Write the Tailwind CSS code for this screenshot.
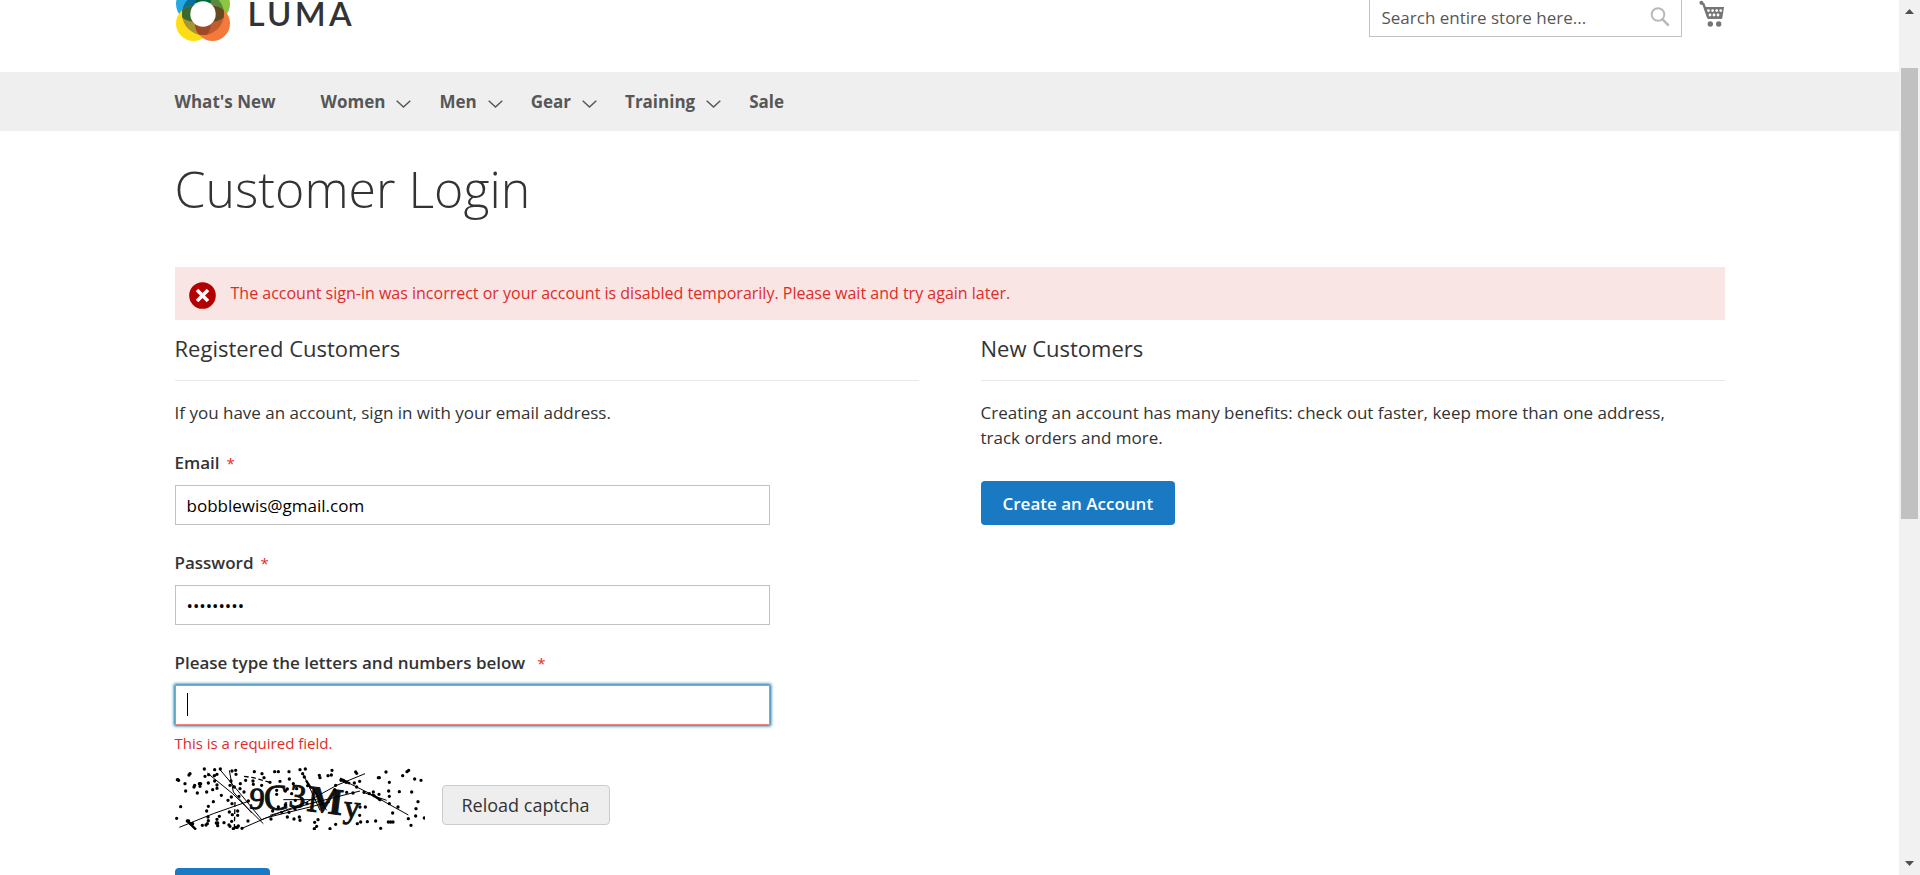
<!DOCTYPE html>
<html lang="en">
<head>
<meta charset="utf-8">
<title>Customer Login</title>
<script src="https://cdn.jsdelivr.net/npm/@tailwindcss/browser@4"></script>
</head>
<body class="flex h-screen overflow-hidden bg-white font-['Open_Sans',sans-serif] text-[17px] leading-[25px] text-[#333333]">
<div class="min-w-0 flex-1">
  <header class="mx-auto flex h-[72px] max-w-[1550px] items-start">
    <a href="#" aria-label="Luma" class="flex items-start gap-[17px]">
      <svg class="h-[42px] w-[56px]" viewBox="175 0 56 42" aria-hidden="true">
        <defs>
          <clipPath id="ring"><circle cx="203" cy="14" r="21"/></clipPath>
          <clipPath id="cb"><circle cx="193.5" cy="4" r="17.5"/></clipPath>
          <clipPath id="cg"><circle cx="212.5" cy="4" r="17.5"/></clipPath>
          <clipPath id="cy"><circle cx="193.5" cy="23.5" r="17.5"/></clipPath>
        </defs>
        <circle cx="193.5" cy="4" r="17.5" fill="#26a9e0"/>
        <circle cx="212.5" cy="4" r="17.5" fill="#8dc63f"/>
        <circle cx="193.5" cy="23.5" r="17.5" fill="#ffdd15"/>
        <circle cx="212.5" cy="23.5" r="17.5" fill="#f4793b"/>
        <g clip-path="url(#ring)">
          <circle cx="193.5" cy="4" r="17.5" fill="#0a7099"/>
          <circle cx="212.5" cy="4" r="17.5" fill="#568a3c"/>
          <circle cx="193.5" cy="23.5" r="17.5" fill="#a89432"/>
          <circle cx="212.5" cy="23.5" r="17.5" fill="#c05d30"/>
          <g clip-path="url(#cb)"><circle cx="193.5" cy="23.5" r="17.5" fill="#39692f"/></g>
          <g clip-path="url(#cg)"><circle cx="212.5" cy="23.5" r="17.5" fill="#64481f"/></g>
          <g clip-path="url(#cb)"><circle cx="212.5" cy="4" r="17.5" fill="#006838"/></g>
          <g clip-path="url(#cy)"><circle cx="212.5" cy="23.5" r="17.5" fill="#9f4a26"/></g>
        </g>
        <circle cx="203" cy="14" r="12.7" fill="#fff"/>
      </svg>
      <span class="-mt-[6px] font-['Lato',sans-serif] text-[33px] leading-[38px] font-semibold tracking-widest">LUMA</span>
    </a>
    <div class="ml-auto flex items-start">
      <form class="relative -mt-[3px]">
        <label for="search" class="sr-only">Search</label>
        <input id="search" type="text" placeholder="Search entire store here..." class="h-10 w-[313px] border border-[#c2c2c2] pr-10 pl-3 placeholder:text-[#575757]">
        <button type="button" aria-label="Search" class="absolute top-[10px] right-3">
          <svg class="size-5" viewBox="0 0 20 20" fill="none" stroke="#b9b9b9" aria-hidden="true"><circle cx="8" cy="7.500" r="6.300" stroke-width="2"/><path d="M12.600 12.300 18 17.800" stroke-width="2.600" stroke-linecap="round"/></svg>
        </button>
      </form>
      <a href="#" aria-label="My Cart" class="ml-[17px]">
        <svg class="h-7 w-[26px]" viewBox="0 0 26 28" aria-hidden="true">
          <path d="M2 2.800 4.500 4.200 9.200 17.600H22.500" fill="none" stroke="#757575" stroke-width="2.400" stroke-linejoin="round"/><circle cx="2.400" cy="2.800" r="2" fill="#757575"/>
          <path d="M5 7H25L23.200 18.800H9Z" fill="#757575"/>
          <g stroke="#fff" stroke-width="2.800" stroke-linecap="round"><path d="M9.500 10.600h0M13.600 10.600h0M17.700 10.600h0M21.700 10.600h0M11 15h0M15 15h0M19 15h0"/></g>
          <circle cx="11.300" cy="24" r="2.700" fill="#757575"/><circle cx="19.700" cy="24" r="2.700" fill="#757575"/>
        </svg>
      </a>
    </div>
  </header>

  <nav class="bg-[#efefef]">
    <ul class="mx-auto flex h-[59px] max-w-[1550px] items-center font-bold text-[#575757]">
      <li class="mr-[45px]"><a href="#">What's New</a></li>
      <li class="mr-7"><a href="#" class="flex items-center gap-[11px]">Women<svg class="mt-1 h-2 w-[15px]" viewBox="0 0 15 8" fill="none" stroke="#575757" stroke-width="1.500" aria-hidden="true"><path d="M.7.800 7.500 7 14.300.800"/></svg></a></li>
      <li class="mr-7"><a href="#" class="flex items-center gap-[11px]">Men<svg class="mt-1 h-2 w-[15px]" viewBox="0 0 15 8" fill="none" stroke="#575757" stroke-width="1.500" aria-hidden="true"><path d="M.7.800 7.500 7 14.300.800"/></svg></a></li>
      <li class="mr-7"><a href="#" class="flex items-center gap-[11px]">Gear<svg class="mt-1 h-2 w-[15px]" viewBox="0 0 15 8" fill="none" stroke="#575757" stroke-width="1.500" aria-hidden="true"><path d="M.7.800 7.500 7 14.300.800"/></svg></a></li>
      <li class="mr-7"><a href="#" class="flex items-center gap-[11px]">Training<svg class="mt-1 h-2 w-[15px]" viewBox="0 0 15 8" fill="none" stroke="#575757" stroke-width="1.500" aria-hidden="true"><path d="M.7.800 7.500 7 14.300.800"/></svg></a></li>
      <li><a href="#">Sale</a></li>
    </ul>
  </nav>

  <main class="mx-auto max-w-[1550px]">
    <h1 class="pt-[31px] text-[50px] leading-[55px] font-light">Customer Login</h1>
    <div role="alert" class="mt-[50px] flex h-[53px] items-center gap-[15px] bg-[#fae5e5] pl-[14px] text-[16px] text-[#e02b27]">
      <svg class="mt-1 size-[27px]" viewBox="0 0 27 27" aria-hidden="true"><circle cx="13.500" cy="13.500" r="13.300" fill="#b30000"/><path d="m8 8 11 11m0-11L8 19" stroke="#fff" stroke-width="3.600"/></svg>
      <p>The account sign-in was incorrect or your account is disabled temporarily. Please wait and try again later.</p>
    </div>

    <div class="grid grid-cols-2 gap-[62px] pt-[13px]">
      <section>
        <h2 class="border-b border-[#e8e8e8] pb-[17px] text-[22px] leading-[30px]">Registered Customers</h2>
        <p class="mt-[19px]">If you have an account, sign in with your email address.</p>
        <form>
          <div class="mt-[25px] w-4/5">
            <label for="email" class="font-semibold">Email<span class="ml-[7px] text-[15px] font-normal text-[#e02b27]">*</span></label>
            <input id="email" type="email" value="bobblewis@gmail.com" class="mt-[9px] block h-10 w-full border border-[#c2c2c2] px-[11px] text-black">
          </div>
          <div class="mt-[25px] w-4/5">
            <label for="password" class="font-semibold">Password<span class="ml-[7px] text-[15px] font-normal text-[#e02b27]">*</span></label>
            <input id="password" type="password" value="lumapass1" class="mt-[9px] block h-10 w-full border border-[#c2c2c2] px-[11px] text-black">
          </div>
          <div class="mt-[25px] w-4/5">
            <label for="captcha" class="font-semibold">Please type the letters and numbers below<span class="ml-3 text-[15px] font-normal text-[#e02b27]">*</span></label>
            <div class="relative mt-[9px]">
              <input id="captcha" type="text" class="block h-10 w-full border border-[#ed8380] px-[11px] shadow-[0_0_3px_1px_#00699d] outline-none">
              <span class="absolute top-2 left-3 h-[23px] w-px bg-black"></span>
            </div>
            <p class="mt-2 text-[15px] leading-5 text-[#e02b27]">This is a required field.</p>
          </div>
          <div class="mt-[14px] flex items-start gap-[17px]">
            <svg class="h-[63px] w-[250px]" viewBox="15 20 750 189" role="img" aria-label="Captcha">
              <g font-family="Liberation Serif, serif" fill="#111" stroke="#111" stroke-width="3">
                <text x="238" y="146" font-size="92" transform="rotate(5 262 120)">9</text>
                <text x="282" y="148" font-size="108" transform="rotate(-5 318 112)">C</text>
                <text x="358" y="142" font-size="100" transform="rotate(8 385 110)">3</text>
                <text x="414" y="158" font-size="112" font-weight="bold" transform="rotate(7 465 120)">M</text>
                <text x="520" y="172" font-size="98" transform="rotate(5 545 160)">y</text>
              </g>
              <path fill="none" stroke="#000" stroke-width="3" d="M28 201 130 160 238 122M112 38 188 100 280 190M150 28 215 105 275 178M178 30 190 95 245 158M216 204 290 172 420 140 480 125M270 180 410 125 500 75 585 40M300 165 420 130 570 92M340 118H440M398 38 425 95 450 150M510 55 600 100 715 164M580 96 650 120M428 85 470 150"/>
              <path fill="none" stroke="#000" stroke-width="4" stroke-dasharray="14 8" d="M195 125 193 208M222 48 250 52 300 66"/>
              <path fill="none" stroke="#000" stroke-width="7" d="M50 180 78 208M510 55 540 70M605 102 632 120M408 60 422 82"/>
              <path fill="none" stroke="#000" stroke-width="10" stroke-linecap="round" d="M22 58h2M25 60h1M45 70h0M57 44h0M60 40h0M47 92h0M74 75h0M72 80h0M88 70h4M90 78h0M82 98h0M103 26h0M134 28h0M151 26h0M105 48h0M116 43h0M133 46h0M141 42h0M134 62h0M141 74h0M141 84h0M128 88h0M110 95h0M115 68h0M154 105h0M130 124h0M115 138h0M110 152h0M32 139h0M20 174h0M52 182h4M62 190h6M114 170h0M115 181h0M97 195h0M108 194h0M112 190h0M141 177h0M148 168h0M139 188h4M143 196h0M162 187h0M177 194h0M180 198h0M190 205h0M198 201h4M205 197h0M178 155h0M187 163h0M185 183h0M203 152h0M203 165h0M234 182h0M216 204h0M184 110h0M186 130h0M174 120h0M183 62h0M180 75h0M193 80h0M186 32h0M197 30h0M198 42h0M211 70h0M210 85h0M222 95h0M207 108h0M235 122h0M227 60h0M249 62h0M250 72h0M253 34h0M276 40h0M282 52h0M300 66h0M275 75h0M314 34h0M325 34h0M357 34h0M390 28h0M406 26h0M398 40h0M403 50h0M330 63h0M358 56h0M370 70h0M352 86h0M320 90h0M320 102h0M346 92h0M365 100h0M380 85h0M413 76h0M376 120h0M411 130h0M346 134h0M325 140h0M308 152h0M303 176h0M335 156h0M357 156h0M352 170h0M372 176h0M388 170h0M390 180h0M375 146h0M448 45h0M450 52h0M474 46h0M484 44h0M486 30h0M513 60h0M520 60h0M528 66h0M497 75h0M494 88h0M530 96h0M557 35h0M560 39h0M553 68h0M560 80h0M549 98h0M569 63h0M582 96h0M598 100h0M610 95h0M612 106h0M627 102h0M630 118h0M625 52h0M628 52h0M648 35h0M658 66h0M656 92h0M658 108h0M658 130h0M688 94h0M684 140h0M698 46h0M711 34h0M716 30h0M734 56h0M753 60h0M725 95h0M744 124h0M738 145h0M737 167h0M763 173h0M715 175h0M723 195h0M655 185h0M662 185h0M669 185h0M668 158h0M632 204h0M617 182h0M592 184h0M570 140h0M586 140h0M569 165h0M572 185h0M562 190h0M480 205h0M433 205h0M440 198h0M444 178h0M434 186h0M497 192h0"/>
            </svg>
            <button type="button" class="mt-[18px] h-10 rounded-[4px] border border-[#cccccc] bg-[#eeeeee] px-[19px] text-[18px]">Reload captcha</button>
          </div>
          <button type="submit" class="mt-[38px] h-11 w-[95px] rounded-[4px] bg-[#1979c3] font-semibold text-white">Sign In</button>
        </form>
      </section>
      <section>
        <h2 class="border-b border-[#e8e8e8] pb-[17px] text-[22px] leading-[30px]">New Customers</h2>
        <p class="mt-[19px] pr-5">Creating an account has many benefits: check out faster, keep more than one address, track orders and more.</p>
        <a href="#" class="mt-[31px] inline-flex h-11 items-center rounded-[4px] bg-[#1979c3] px-[22px] font-semibold text-white">Create an Account</a>
      </section>
    </div>
  </main>
</div>

<div class="flex w-[21px] shrink-0 flex-col items-center bg-[#f1f1f1] py-[9px]" aria-hidden="true">
  <svg class="h-[5px] w-[9px]" viewBox="0 0 9 5"><path d="M4.500 0 9 5H0Z" fill="#505050"/></svg>
  <div class="mt-[54px] h-[451px] w-[17px] bg-[#c1c1c1]"></div>
  <svg class="mt-auto h-[5px] w-[9px]" viewBox="0 0 9 5"><path d="M0 0H9L4.500 5Z" fill="#505050"/></svg>
</div>
</body>
</html>
